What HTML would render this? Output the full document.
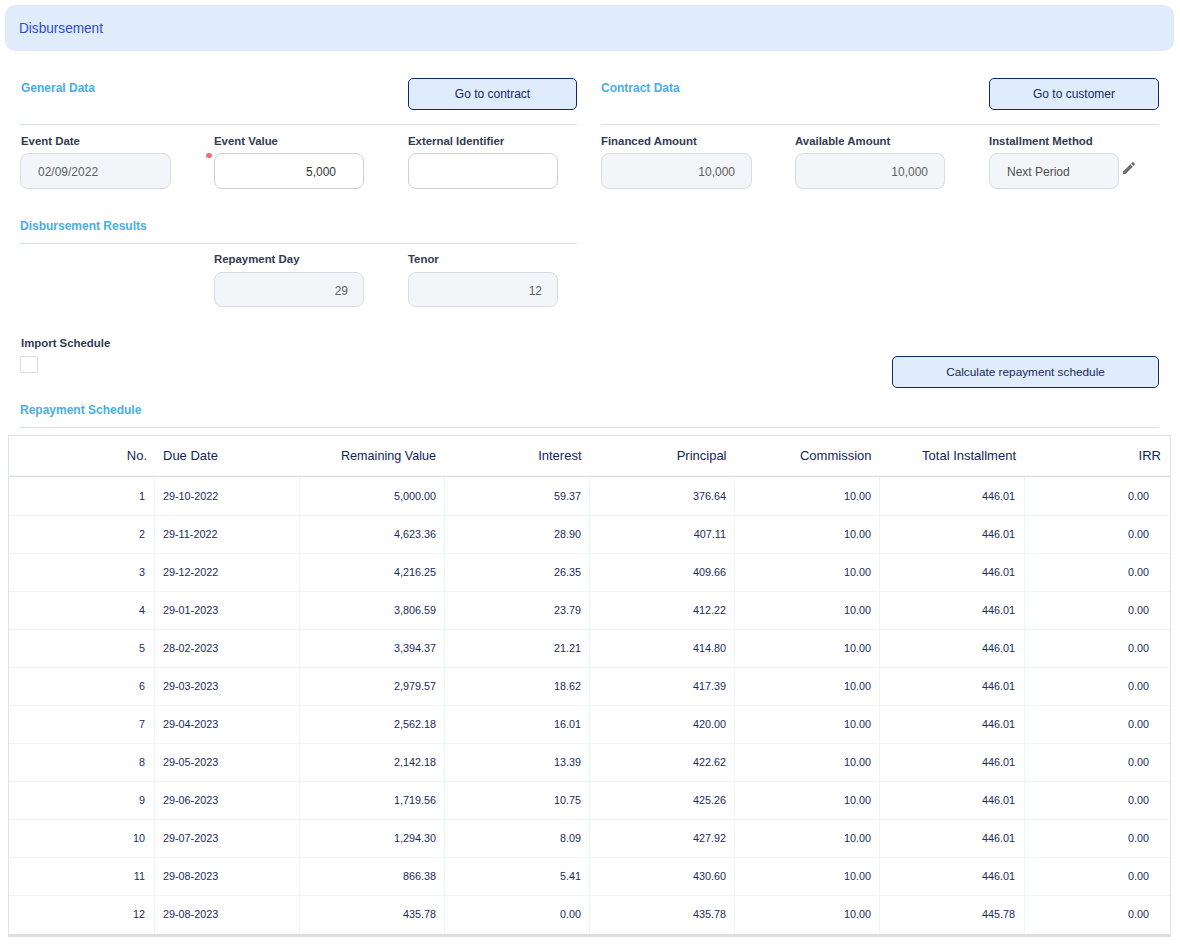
<!DOCTYPE html>
<html><head><meta charset="utf-8">
<style>
html,body{margin:0;padding:0;background:#fff;width:1180px;height:946px;overflow:hidden;position:relative;font-family:"Liberation Sans",sans-serif;}
.a{position:absolute;white-space:nowrap;}
.hdr{left:5px;top:5px;width:1169px;height:46px;background:#e0ecfc;border-radius:10px;}
.hdr span{position:absolute;left:14px;top:13px;font-size:14px;line-height:20px;color:#2a4fc6;display:inline-block;transform:scaleX(0.972);transform-origin:0 0;}
.sec{font-weight:bold;font-size:12px;color:#49aee4;line-height:14px;}
.btn{box-sizing:border-box;border:1px solid #0f2b64;background:#e0ecfc;border-radius:5px;height:32px;font-size:12px;color:#16285a;text-align:center;line-height:30px;}
.sep{height:1px;background:#dbe3e6;}
.lbl{font-weight:bold;font-size:11.4px;color:#323a52;line-height:14px;}
.inp{box-sizing:border-box;height:36px;border:1px solid #d8dce4;border-radius:8px;background:#f3f5f9;font-size:12px;color:#606060;line-height:34px;padding-top:1px;}
.inp.w{background:#fff;border-color:#d0d0d0;color:#383838;}
.r{text-align:right;}
.th{font-size:13px;color:#14255c;line-height:20px;}
.td{font-size:10.8px;color:#1a2b5e;line-height:20px;}
</style></head><body>
<div class="a hdr"><span>Disbursement</span></div>

<div class="a sec" style="left:21px;top:81px;">General Data</div>
<div class="a btn" style="left:408px;top:78px;width:169px;">Go to contract</div>
<div class="a sec" style="left:601px;top:81px;">Contract Data</div>
<div class="a btn" style="left:989px;top:78px;width:170px;">Go to customer</div>
<div class="a sep" style="left:20px;top:124px;width:557px;"></div>
<div class="a sep" style="left:601px;top:124px;width:558px;"></div>

<div class="a lbl" style="left:21px;top:134px;">Event Date</div>
<div class="a lbl" style="left:214px;top:134px;">Event Value</div>
<div class="a lbl" style="left:408px;top:134px;">External Identifier</div>
<div class="a lbl" style="left:601px;top:134px;">Financed Amount</div>
<div class="a lbl" style="left:795px;top:134px;">Available Amount</div>
<div class="a lbl" style="left:989px;top:134px;">Installment Method</div>

<div class="a inp" style="left:20px;top:153px;width:151px;padding-left:17px;">02/09/2022</div>
<div class="a" style="left:206.2px;top:152.5px;width:5.8px;height:5.8px;border-radius:50%;background:#f46e82;"></div>
<div class="a inp w r" style="left:214px;top:153px;width:150px;padding-right:27px;">5,000</div>
<div class="a inp w" style="left:408px;top:153px;width:150px;"></div>
<div class="a inp r" style="left:601px;top:153px;width:151px;padding-right:16px;">10,000</div>
<div class="a inp r" style="left:795px;top:153px;width:150px;padding-right:16px;">10,000</div>
<div class="a inp" style="left:989px;top:153px;width:130px;padding-left:17px;color:#505050;">Next Period</div>
<svg class="a" style="left:1121px;top:160px;" width="16" height="16" viewBox="0 0 24 24"><path d="M3 17.25V21h3.75L17.81 9.94l-3.75-3.75L3 17.25zM20.71 7.04c.39-.39.39-1.02 0-1.41l-2.34-2.34c-.39-.39-1.02-.39-1.41 0l-1.83 1.83 3.75 3.75 1.830-1.83z" fill="#6f6f6f"/></svg>

<div class="a sec" style="left:20px;top:219px;">Disbursement Results</div>
<div class="a sep" style="left:20px;top:243px;width:557px;"></div>
<div class="a lbl" style="left:214px;top:252px;">Repayment Day</div>
<div class="a lbl" style="left:408px;top:252px;">Tenor</div>
<div class="a inp r" style="left:214px;top:272px;width:150px;height:35px;line-height:34px;padding-right:15px;">29</div>
<div class="a inp r" style="left:408px;top:272px;width:150px;height:35px;line-height:34px;padding-right:15px;">12</div>

<div class="a lbl" style="left:21px;top:336px;">Import Schedule</div>
<div class="a" style="left:20px;top:356px;width:16px;height:15px;border:1px solid #dcdcdc;border-radius:2px;"></div>
<div class="a btn" style="left:892px;top:356px;width:267px;font-size:11.8px;">Calculate repayment schedule</div>

<div class="a sec" style="left:20px;top:403px;">Repayment Schedule</div>
<div class="a sep" style="left:20px;top:427px;width:1139px;"></div>

<div id="tbl">
<div class="a" style="left:8px;top:435px;width:1161px;height:498px;border:1px solid #e2e2e2;border-bottom:none;"></div>
<div class="a" style="left:9px;top:475px;width:1161px;height:1px;background:#eff9fb;"></div>
<div class="a" style="left:9px;top:476px;width:1161px;height:1px;background:#dcdede;"></div>
<div class="a" style="left:9px;top:515px;width:1161px;height:1px;background:#f2f2f2;"></div>
<div class="a" style="left:9px;top:553px;width:1161px;height:1px;background:#f2f2f2;"></div>
<div class="a" style="left:9px;top:591px;width:1161px;height:1px;background:#f2f2f2;"></div>
<div class="a" style="left:9px;top:629px;width:1161px;height:1px;background:#f2f2f2;"></div>
<div class="a" style="left:9px;top:667px;width:1161px;height:1px;background:#f2f2f2;"></div>
<div class="a" style="left:9px;top:705px;width:1161px;height:1px;background:#f2f2f2;"></div>
<div class="a" style="left:9px;top:743px;width:1161px;height:1px;background:#f2f2f2;"></div>
<div class="a" style="left:9px;top:781px;width:1161px;height:1px;background:#f2f2f2;"></div>
<div class="a" style="left:9px;top:819px;width:1161px;height:1px;background:#f2f2f2;"></div>
<div class="a" style="left:9px;top:857px;width:1161px;height:1px;background:#f2f2f2;"></div>
<div class="a" style="left:9px;top:895px;width:1161px;height:1px;background:#f2f2f2;"></div>
<div class="a" style="left:8px;top:934px;width:1163px;height:3px;background:#dedede;"></div>
<div class="a" style="left:154px;top:477px;width:1px;height:457px;background:#ecf6f8;"></div>
<div class="a" style="left:299px;top:477px;width:1px;height:457px;background:#ecf6f8;"></div>
<div class="a" style="left:444px;top:477px;width:1px;height:457px;background:#ecf6f8;"></div>
<div class="a" style="left:589px;top:477px;width:1px;height:457px;background:#ecf6f8;"></div>
<div class="a" style="left:734px;top:477px;width:1px;height:457px;background:#ecf6f8;"></div>
<div class="a" style="left:879px;top:477px;width:1px;height:457px;background:#ecf6f8;"></div>
<div class="a" style="left:1024px;top:477px;width:1px;height:457px;background:#ecf6f8;"></div>
<div class="a th" style="right:1033px;top:445.50px;">No.</div>
<div class="a th" style="left:163px;top:445.50px;">Due Date</div>
<div class="a th" style="font-size:12.6px;right:744px;top:445.50px;">Remaining Value</div>
<div class="a th" style="right:598.5px;top:445.50px;">Interest</div>
<div class="a th" style="right:453.5px;top:445.50px;">Principal</div>
<div class="a th" style="right:308.5px;top:445.50px;">Commission</div>
<div class="a th" style="right:164px;top:445.50px;">Total Installment</div>
<div class="a th" style="right:19px;top:445.50px;">IRR</div>
<div class="a td" style="right:1035px;top:486.26px;">1</div>
<div class="a td" style="left:163px;top:486.26px;">29-10-2022</div>
<div class="a td" style="right:744px;top:486.26px;">5,000.00</div>
<div class="a td" style="right:599px;top:486.26px;">59.37</div>
<div class="a td" style="right:454px;top:486.26px;">376.64</div>
<div class="a td" style="right:309px;top:486.26px;">10.00</div>
<div class="a td" style="right:165px;top:486.26px;">446.01</div>
<div class="a td" style="right:31px;top:486.26px;">0.00</div>
<div class="a td" style="right:1035px;top:524.26px;">2</div>
<div class="a td" style="left:163px;top:524.26px;">29-11-2022</div>
<div class="a td" style="right:744px;top:524.26px;">4,623.36</div>
<div class="a td" style="right:599px;top:524.26px;">28.90</div>
<div class="a td" style="right:454px;top:524.26px;">407.11</div>
<div class="a td" style="right:309px;top:524.26px;">10.00</div>
<div class="a td" style="right:165px;top:524.26px;">446.01</div>
<div class="a td" style="right:31px;top:524.26px;">0.00</div>
<div class="a td" style="right:1035px;top:562.26px;">3</div>
<div class="a td" style="left:163px;top:562.26px;">29-12-2022</div>
<div class="a td" style="right:744px;top:562.26px;">4,216.25</div>
<div class="a td" style="right:599px;top:562.26px;">26.35</div>
<div class="a td" style="right:454px;top:562.26px;">409.66</div>
<div class="a td" style="right:309px;top:562.26px;">10.00</div>
<div class="a td" style="right:165px;top:562.26px;">446.01</div>
<div class="a td" style="right:31px;top:562.26px;">0.00</div>
<div class="a td" style="right:1035px;top:600.26px;">4</div>
<div class="a td" style="left:163px;top:600.26px;">29-01-2023</div>
<div class="a td" style="right:744px;top:600.26px;">3,806.59</div>
<div class="a td" style="right:599px;top:600.26px;">23.79</div>
<div class="a td" style="right:454px;top:600.26px;">412.22</div>
<div class="a td" style="right:309px;top:600.26px;">10.00</div>
<div class="a td" style="right:165px;top:600.26px;">446.01</div>
<div class="a td" style="right:31px;top:600.26px;">0.00</div>
<div class="a td" style="right:1035px;top:638.26px;">5</div>
<div class="a td" style="left:163px;top:638.26px;">28-02-2023</div>
<div class="a td" style="right:744px;top:638.26px;">3,394.37</div>
<div class="a td" style="right:599px;top:638.26px;">21.21</div>
<div class="a td" style="right:454px;top:638.26px;">414.80</div>
<div class="a td" style="right:309px;top:638.26px;">10.00</div>
<div class="a td" style="right:165px;top:638.26px;">446.01</div>
<div class="a td" style="right:31px;top:638.26px;">0.00</div>
<div class="a td" style="right:1035px;top:676.26px;">6</div>
<div class="a td" style="left:163px;top:676.26px;">29-03-2023</div>
<div class="a td" style="right:744px;top:676.26px;">2,979.57</div>
<div class="a td" style="right:599px;top:676.26px;">18.62</div>
<div class="a td" style="right:454px;top:676.26px;">417.39</div>
<div class="a td" style="right:309px;top:676.26px;">10.00</div>
<div class="a td" style="right:165px;top:676.26px;">446.01</div>
<div class="a td" style="right:31px;top:676.26px;">0.00</div>
<div class="a td" style="right:1035px;top:714.26px;">7</div>
<div class="a td" style="left:163px;top:714.26px;">29-04-2023</div>
<div class="a td" style="right:744px;top:714.26px;">2,562.18</div>
<div class="a td" style="right:599px;top:714.26px;">16.01</div>
<div class="a td" style="right:454px;top:714.26px;">420.00</div>
<div class="a td" style="right:309px;top:714.26px;">10.00</div>
<div class="a td" style="right:165px;top:714.26px;">446.01</div>
<div class="a td" style="right:31px;top:714.26px;">0.00</div>
<div class="a td" style="right:1035px;top:752.26px;">8</div>
<div class="a td" style="left:163px;top:752.26px;">29-05-2023</div>
<div class="a td" style="right:744px;top:752.26px;">2,142.18</div>
<div class="a td" style="right:599px;top:752.26px;">13.39</div>
<div class="a td" style="right:454px;top:752.26px;">422.62</div>
<div class="a td" style="right:309px;top:752.26px;">10.00</div>
<div class="a td" style="right:165px;top:752.26px;">446.01</div>
<div class="a td" style="right:31px;top:752.26px;">0.00</div>
<div class="a td" style="right:1035px;top:790.26px;">9</div>
<div class="a td" style="left:163px;top:790.26px;">29-06-2023</div>
<div class="a td" style="right:744px;top:790.26px;">1,719.56</div>
<div class="a td" style="right:599px;top:790.26px;">10.75</div>
<div class="a td" style="right:454px;top:790.26px;">425.26</div>
<div class="a td" style="right:309px;top:790.26px;">10.00</div>
<div class="a td" style="right:165px;top:790.26px;">446.01</div>
<div class="a td" style="right:31px;top:790.26px;">0.00</div>
<div class="a td" style="right:1035px;top:828.26px;">10</div>
<div class="a td" style="left:163px;top:828.26px;">29-07-2023</div>
<div class="a td" style="right:744px;top:828.26px;">1,294.30</div>
<div class="a td" style="right:599px;top:828.26px;">8.09</div>
<div class="a td" style="right:454px;top:828.26px;">427.92</div>
<div class="a td" style="right:309px;top:828.26px;">10.00</div>
<div class="a td" style="right:165px;top:828.26px;">446.01</div>
<div class="a td" style="right:31px;top:828.26px;">0.00</div>
<div class="a td" style="right:1035px;top:866.26px;">11</div>
<div class="a td" style="left:163px;top:866.26px;">29-08-2023</div>
<div class="a td" style="right:744px;top:866.26px;">866.38</div>
<div class="a td" style="right:599px;top:866.26px;">5.41</div>
<div class="a td" style="right:454px;top:866.26px;">430.60</div>
<div class="a td" style="right:309px;top:866.26px;">10.00</div>
<div class="a td" style="right:165px;top:866.26px;">446.01</div>
<div class="a td" style="right:31px;top:866.26px;">0.00</div>
<div class="a td" style="right:1035px;top:904.26px;">12</div>
<div class="a td" style="left:163px;top:904.26px;">29-08-2023</div>
<div class="a td" style="right:744px;top:904.26px;">435.78</div>
<div class="a td" style="right:599px;top:904.26px;">0.00</div>
<div class="a td" style="right:454px;top:904.26px;">435.78</div>
<div class="a td" style="right:309px;top:904.26px;">10.00</div>
<div class="a td" style="right:165px;top:904.26px;">445.78</div>
<div class="a td" style="right:31px;top:904.26px;">0.00</div>
</div>
</body></html>
